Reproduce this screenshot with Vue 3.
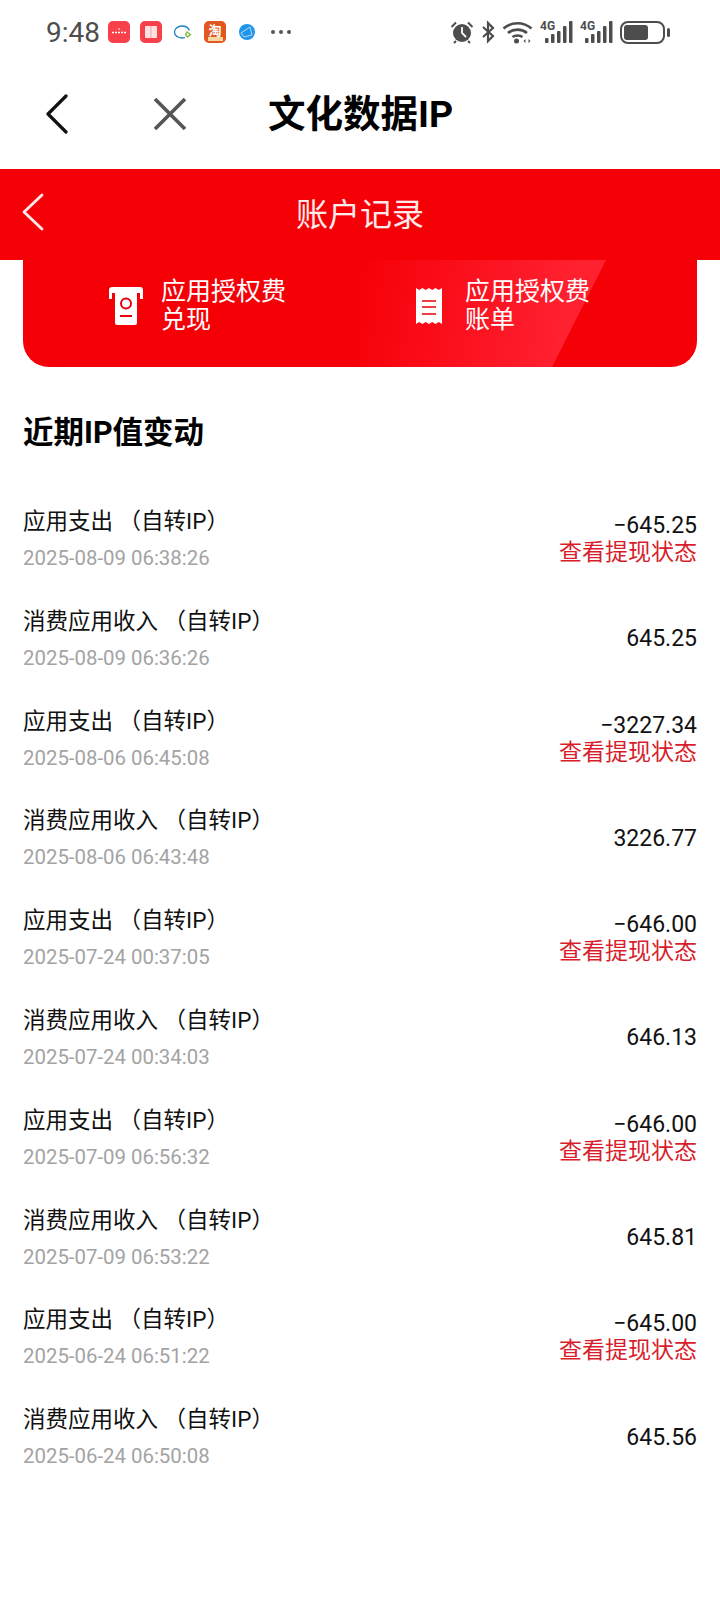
<script setup>
const records = [
  { title: '应用支出 （自转IP）', time: '2025-08-09 06:38:26', amount: '−645.25', out: true },
  { title: '消费应用收入 （自转IP）', time: '2025-08-09 06:36:26', amount: '645.25' },
  { title: '应用支出 （自转IP）', time: '2025-08-06 06:45:08', amount: '−3227.34', out: true },
  { title: '消费应用收入 （自转IP）', time: '2025-08-06 06:43:48', amount: '3226.77' },
  { title: '应用支出 （自转IP）', time: '2025-07-24 00:37:05', amount: '−646.00', out: true },
  { title: '消费应用收入 （自转IP）', time: '2025-07-24 00:34:03', amount: '646.13' },
  { title: '应用支出 （自转IP）', time: '2025-07-09 06:56:32', amount: '−646.00', out: true },
  { title: '消费应用收入 （自转IP）', time: '2025-07-09 06:53:22', amount: '645.81' },
  { title: '应用支出 （自转IP）', time: '2025-06-24 06:51:22', amount: '−645.00', out: true },
  { title: '消费应用收入 （自转IP）', time: '2025-06-24 06:50:08', amount: '645.56' }
]
</script>

<template>
  <div class="page">
    <div class="status">
      <div class="status-left">
        <span class="clock">9:48</span>
        <svg class="app" width="22" height="22" viewBox="0 0 22 22"><rect width="22" height="22" rx="5" fill="#f8404a" /><path d="M4 11.500h14" stroke="#fff" stroke-width="1.300" stroke-dasharray="2 1" /><path d="M10 8h2" stroke="#fff" /></svg>
        <svg class="app" width="22" height="22" viewBox="0 0 22 22"><rect width="22" height="22" rx="5" fill="#f8404a" /><rect x="5" y="5" width="12" height="12" rx="1" fill="#fde3e3" /><path d="M11 5v12" stroke="#f8a0a0" /></svg>
        <svg class="app" width="22" height="22" viewBox="0 0 22 22"><path d="M13 16.500c-1 .4-2 .5-3 .5-4 0-7.500-2.500-7.500-6S6 5 10 5c3.500 0 6.500 2 7.300 4.500" fill="none" stroke="#1b7fc4" stroke-width="1.300" /><path d="M15 11l3.500 2.500-3 2.500-2-2.500z" fill="none" stroke="#7bb83c" stroke-width="1.300" /></svg>
        <svg class="app" width="22" height="22" viewBox="0 0 22 22"><rect width="22" height="22" rx="5" fill="#e2561f" /><text x="11" y="14" font-size="13" font-weight="700" fill="#fff" text-anchor="middle" font-family="Noto Sans CJK SC">淘</text><rect x="4" y="16" width="15" height="4" fill="#f7d7a0" /></svg>
        <svg class="app" width="22" height="22" viewBox="0 0 22 22"><circle cx="11" cy="11" r="8" fill="#2196e8" /><path d="M5 12l9-6 2 8-8 2z" fill="none" stroke="#bfe3fb" stroke-width=".9" /></svg>
        <span class="more"><i></i><i></i><i></i></span>
      </div>
      <div class="status-right">
        <svg width="24" height="24" viewBox="0 0 24 24" fill="#4d4d4d"><circle cx="12" cy="13" r="9" /><path d="M1.500 7L6 2.500M22.500 7L18 2.500M6 21l-2 2M18 21l2 2" stroke="#4d4d4d" stroke-width="2" /><path d="M12 7v6l4 4" fill="none" stroke="#fff" stroke-width="1.800" /></svg>
        <svg width="14" height="24" viewBox="0 0 14 24"><path d="M2 7l10 9-5 5V3l5 5-10 9" fill="none" stroke="#4d4d4d" stroke-width="2.200" /></svg>
        <svg width="31" height="24" viewBox="0 0 30 24"><path d="M1 8.500c8-7 20-7 28 0M5.500 13c5.500-4.500 13.500-4.500 19 0M10 17c2.800-2 7.200-2 10 0" fill="none" stroke="#4d4d4d" stroke-width="2.600" /><circle cx="14" cy="21" r="2.500" fill="#4d4d4d" /><path d="M21 21l2-2v4zM26 19l2 2-2 2z" fill="#4d4d4d" /></svg>
        <svg v-for="n in 2" :key="n" width="33" height="24" viewBox="0 0 33 24" fill="#4d4d4d"><text x="0" y="10" font-size="12" font-weight="700" font-family="Roboto">4G</text><rect x="5" y="18" width="3.500" height="5" rx="1" /><rect x="11" y="14" width="3.500" height="9" rx="1" /><rect x="17" y="11" width="3.500" height="12" rx="1" /><rect x="23" y="6" width="3.500" height="17" rx="1" /><rect x="29" y="1" width="3.500" height="22" rx="1" /></svg>
        <span class="battery"><span class="battery-body"><span class="battery-fill"></span></span><span class="battery-tip"></span></span>
      </div>
    </div>

    <div class="nav">
      <svg class="nav-back" width="24" height="40" viewBox="0 0 24 40"><path d="M21 2L3 20l18 18" fill="none" stroke="#111" stroke-width="3.200" stroke-linecap="round" stroke-linejoin="round" /></svg>
      <svg class="nav-close" width="34" height="34" viewBox="0 0 34 34"><path d="M2 2l30 30M32 2L2 32" fill="none" stroke="#555" stroke-width="3.600" /></svg>
      <h1>文化数据IP</h1>
    </div>

    <div class="red-head">
      <svg width="24" height="38" viewBox="0 0 24 38"><path d="M21 2L3 19l18 17" fill="none" stroke="#fdeaea" stroke-width="2.800" stroke-linecap="round" stroke-linejoin="round" /></svg>
      <span>账户记录</span>
    </div>

    <div class="tabs">
      <div class="tab">
        <svg width="34" height="38" viewBox="0 0 34 38"><path d="M3 0h28a3 3 0 0 1 3 3v9h-3V6H3v6H0V3a3 3 0 0 1 3-3z" fill="#fff" /><rect x="6" y="3" width="22" height="35" rx="2" fill="#fff" /><circle cx="17" cy="16.500" r="5" fill="none" stroke="#e8000c" stroke-width="2" /><path d="M11 29h12" stroke="#e8000c" stroke-width="2" /></svg>
        <span>应用授权费<br>兑现</span>
      </div>
      <div class="tab active">
        <svg width="26" height="38" viewBox="0 0 26 38"><path d="M0 1l3.200 2L6.500 1l3.200 2L13 1l3.200 2L19.500 1l3.200 2L26 1v36l-3.300-2-3.200 2-3.300-2L13 37l-3.300-2-3.200 2-3.300-2L0 37z" fill="#fff" /><path d="M6 14h14M6 20h14M6 27h14" stroke="#e8000c" stroke-width="1.600" /></svg>
        <span>应用授权费<br>账单</span>
      </div>
    </div>

    <h2>近期IP值变动</h2>

    <div class="list">
      <div v-for="r in records" :key="r.time" class="row">
        <div>
          <div class="title">{{ r.title }}</div>
          <div class="time">{{ r.time }}</div>
        </div>
        <div class="right">
          <div class="amount">{{ r.amount }}</div>
          <div v-if="r.out" class="link">查看提现状态</div>
        </div>
      </div>
    </div>
  </div>
</template>

<style>
body {
  background: #fff;
}
</style>

<style scoped>
.page {
  width: 720px;
  height: 1600px;
  overflow: hidden;
  background: #fff;
  font-family: "Roboto", "Noto Sans CJK SC", sans-serif;
  color: #111;
}

.status {
  height: 64px;
  display: flex;
  justify-content: space-between;
  align-items: center;
  padding: 0 50px 0 46px;
}

.status-left,
.status-right {
  display: flex;
  align-items: center;
}

.clock {
  font-size: 28px;
  color: #4d4d4d;
  margin-right: 8px;
  width: 54px;
}

.app {
  margin-right: 10px;
}

.more {
  display: flex;
  gap: 4px;
  margin-left: 3px;
}

.more i {
  width: 4px;
  height: 4px;
  border-radius: 50%;
  background: #555;
}

.status-right {
  gap: 7px;
}

.battery {
  display: flex;
  align-items: center;
  gap: 2px;
}

.battery-body {
  width: 45px;
  height: 23px;
  border: 2px solid #4d4d4d;
  border-radius: 8px;
  padding: 2px;
  box-sizing: border-box;
}

.battery-fill {
  display: block;
  width: 24px;
  height: 100%;
  border-radius: 3px;
  background: #4d4d4d;
}

.battery-tip {
  width: 3px;
  height: 9px;
  border-radius: 2px;
  background: #4d4d4d;
}

.nav {
  height: 105px;
  display: flex;
  align-items: center;
  padding: 0 0 5px 45px;
  box-sizing: border-box;
}

.nav-close {
  margin-left: 84px;
}

.nav h1 {
  margin: 0 0 0 81px;
  font-size: 37.5px;
  line-height: 44px;
  font-weight: 700;
  color: #000;
}

.red-head {
  position: relative;
  height: 91px;
  background: #f60008;
  display: flex;
  align-items: center;
  justify-content: center;
  color: #fdeaea;
  font-size: 32px;
  padding-bottom: 6px;
  box-sizing: border-box;
}

.red-head svg {
  position: absolute;
  left: 21px;
  top: 24px;
}

.tabs {
  margin: 0 23px;
  height: 107px;
  background: #f60008;
  border-radius: 0 0 26px 26px;
  display: flex;
  overflow: hidden;
  position: relative;
}

.tabs .active::before {
  content: "";
  position: absolute;
  top: 0;
  bottom: 0;
  left: 0;
  width: 100%;
  background: linear-gradient(100deg, #f60008 0%, #ff2030 60%);
  clip-path: polygon(0 0, 73% 0, 57% 100%, 0 100%);
  z-index: 0;
}

.tab {
  flex: 0 0 50%;
  box-sizing: border-box;
  display: flex;
  align-items: center;
  position: relative;
  color: #fff;
  font-size: 25px;
  line-height: 28px;
  padding: 0 0 16px 86px;
  gap: 18px;
}

.tab > * {
  position: relative;
  z-index: 1;
}

.tab.active {
  padding-left: 56px;
  gap: 23px;
}

h2 {
  margin: 46px 0 0 23px;
  font-size: 30.5px;
  line-height: 40px;
  font-weight: 700;
  color: #000;
}

.list {
  margin-top: 52px;
  padding: 0 23px;
}

.row {
  height: 99.8px;
  display: flex;
  justify-content: space-between;
  align-items: flex-start;
}

.title {
  font-size: 22.5px;
  line-height: 32px;
  color: #111;
}

.time {
  margin-top: 9px;
  font-size: 20.4px;
  line-height: 24px;
  color: #a3a3a3;
}

.right {
  text-align: right;
  height: 68px;
  display: flex;
  flex-direction: column;
  justify-content: center;
}

.amount {
  font-size: 23px;
  line-height: 27px;
}

.link {
  font-size: 23px;
  line-height: 27px;
  color: #d81e2c;
}
</style>
